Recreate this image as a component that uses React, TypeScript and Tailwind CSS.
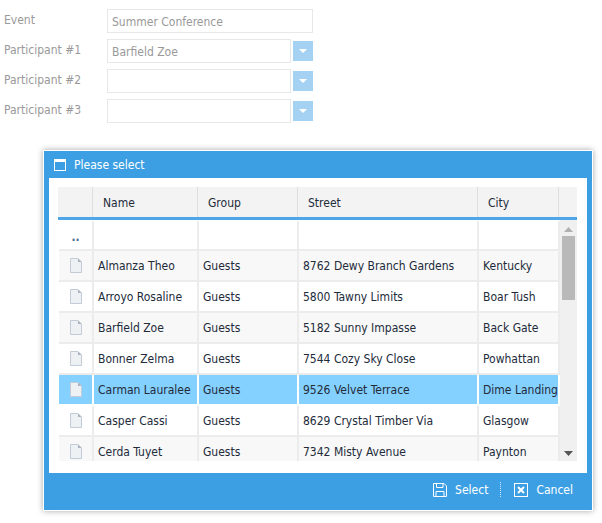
import React from 'react';

const FONT = '"DejaVu Sans Condensed", "DejaVu Sans", sans-serif';

interface Person {
  name: string;
  group: string;
  street: string;
  city: string;
}

const people: Person[] = [
  { name: 'Almanza Theo', group: 'Guests', street: '8762 Dewy Branch Gardens', city: 'Kentucky' },
  { name: 'Arroyo Rosaline', group: 'Guests', street: '5800 Tawny Limits', city: 'Boar Tush' },
  { name: 'Barfield Zoe', group: 'Guests', street: '5182 Sunny Impasse', city: 'Back Gate' },
  { name: 'Bonner Zelma', group: 'Guests', street: '7544 Cozy Sky Close', city: 'Powhattan' },
  { name: 'Carman Lauralee', group: 'Guests', street: '9526 Velvet Terrace', city: 'Dime Landing' },
  { name: 'Casper Cassi', group: 'Guests', street: '8629 Crystal Timber Via', city: 'Glasgow' },
  { name: 'Cerda Tuyet', group: 'Guests', street: '7342 Misty Avenue', city: 'Paynton' },
];

const DocIcon = () => (
  <svg width="12" height="15" viewBox="0 0 12 15">
    <path d="M0.5 0.5H8L11.5 4V14.5H0.5Z" fill="#eef1f4" stroke="#c3ccd6" />
    <path d="M8 0.5V4H11.5Z" fill="#a9b3bd" />
  </svg>
);

const ComboRow = ({ label, value }: { label: string; value?: string }) => (
  <div className="flex h-[30px] items-center">
    <div className="w-[103px] pb-[2px] text-[12px] text-[#999999]">{label}</div>
    <div className="flex h-6 w-[184px] items-center border border-[#e8e8e8] pl-1 pt-px text-[12px] text-[#999999]">{value}</div>
    <div className="ml-0.5 flex h-5 w-5 items-center justify-center bg-[#a5d2f2]">
      <svg width="8" height="4" viewBox="0 0 8 4">
        <path d="M0 0H8L4 4Z" fill="#ffffff" />
      </svg>
    </div>
  </div>
);

const Cell = ({ className, children }: { className: string; children?: React.ReactNode }) => (
  <div className={`flex shrink-0 items-center border-r-2 ${className}`}>{children}</div>
);

const HeaderCell = ({ className, children }: { className: string; children?: React.ReactNode }) => (
  <div className={`flex h-full shrink-0 items-center border-r border-[#dedede] pl-[10px] pt-px ${className}`}>{children}</div>
);

const App: React.FC = () => {
  return (
    <div className="h-[523px] w-[602px] overflow-hidden bg-white" style={{ fontFamily: FONT }}>
      <div className="pl-1 pt-[6px]">
        <div className="flex h-[30px] items-center">
          <div className="w-[103px] pb-[2px] text-[12px] text-[#999999]">Event</div>
          <div className="flex h-6 w-[206px] items-center border border-[#e8e8e8] pl-1 pt-px text-[12px] text-[#999999]">Summer Conference</div>
        </div>
        <ComboRow label="Participant #1" value="Barfield Zoe" />
        <ComboRow label="Participant #2" />
        <ComboRow label="Participant #3" />
      </div>

      <div className="ml-[43px] mt-[24px] w-[550px] border border-white bg-[#3d9fe3] shadow-[0_0_6px_rgba(0,0,0,0.35)]">
        <div className="flex h-[27px] items-center pl-[10px] text-[12px] text-white">
          <svg width="12" height="12" viewBox="0 0 12 12">
            <rect x="0.5" y="0.5" width="11" height="11" fill="#3d9fe3" stroke="#ffffff" />
            <rect x="0" y="0" width="12" height="3" fill="#ffffff" />
          </svg>
          <span className="ml-[8px]">Please select</span>
        </div>

        <div className="mx-[5px] h-[295px] bg-white pl-[9px] pt-[9px]">
          <div className="w-[519px] text-[12px] text-[#222b3a]">
            <div className="flex h-[33px] border-b-[3px] border-[#4ea6e6] bg-[#f3f3f3]">
              <HeaderCell className="w-[35px]" />
              <HeaderCell className="w-[105px]">Name</HeaderCell>
              <HeaderCell className="w-[100px]">Group</HeaderCell>
              <HeaderCell className="w-[180px]">Street</HeaderCell>
              <HeaderCell className="w-[81px]">City</HeaderCell>
            </div>
            <div className="flex h-[241px] pl-px">
              <div className="w-[501px] overflow-hidden pt-px">
                <div className="flex h-[30px] border-b-2 border-[#ececec]">
                  <Cell className="w-[35px] justify-center border-[#ececec] pt-1 font-bold text-[#4a6a8a]">..</Cell>
                  <Cell className="w-[105px] border-[#ececec]" />
                  <Cell className="w-[100px] border-[#ececec]" />
                  <Cell className="w-[180px] border-[#ececec]" />
                  <Cell className="w-[81px] border-[#ececec]" />
                </div>
                {people.map((person, i) => {
                  const selected = person.name === 'Carman Lauralee';
                  const line = selected ? 'border-white' : 'border-[#ececec]';
                  return (
                    <div
                      key={person.name}
                      className={`flex h-[31px] border-b-2 ${line} ${
                        selected ? 'bg-[#84d0ff]' : i % 2 === 0 ? 'bg-[#f8f8f8]' : 'bg-white'
                      }`}
                    >
                      <Cell className={`w-[35px] justify-center ${line}`}>
                        <DocIcon />
                      </Cell>
                      <Cell className={`w-[105px] pl-1 ${line}`}>{person.name}</Cell>
                      <Cell className={`w-[100px] pl-1 ${line}`}>{person.group}</Cell>
                      <Cell className={`w-[180px] pl-1 ${line}`}>{person.street}</Cell>
                      <Cell className={`w-[81px] whitespace-nowrap pl-1 ${line}`}>{person.city}</Cell>
                    </div>
                  );
                })}
              </div>
              <div className="relative h-[241px] w-[17px] bg-[#f0f0f0]">
                <svg className="absolute left-1 top-[7px]" width="9" height="5" viewBox="0 0 9 5">
                  <path d="M0 5L4.5 0L9 5Z" fill="#b0b0b0" />
                </svg>
                <div className="absolute left-[2px] top-[16px] h-[64px] w-[13px] bg-[#b9b9b9]" />
                <svg className="absolute bottom-[5px] left-1" width="9" height="5" viewBox="0 0 9 5">
                  <path d="M0 0H9L4.5 5Z" fill="#555555" />
                </svg>
              </div>
            </div>
          </div>
        </div>

        <div className="flex h-[37px] items-center justify-end pb-1 pr-[19px] text-[12px] text-white">
          <svg width="14" height="14" viewBox="0 0 14 14" fill="none" stroke="#ffffff">
            <path d="M0.5 0.5H11L13.5 3V13.5H0.5Z" />
            <path d="M3.5 0.5V4.5H10V0.5" />
            <path d="M3 13.5V8.5H11V13.5" />
          </svg>
          <span className="ml-2">Select</span>
          <div className="ml-3 h-[15px] border-l border-dotted border-[#cfe7f8]" />
          <svg className="ml-[13px]" width="14" height="14" viewBox="0 0 14 14" fill="none" stroke="#ffffff">
            <rect x="0.5" y="0.5" width="13" height="13" />
            <path d="M4 4L10 10M10 4L4 10" strokeWidth="2" />
          </svg>
          <span className="ml-2">Cancel</span>
        </div>
      </div>
    </div>
  );
};

export default App;
